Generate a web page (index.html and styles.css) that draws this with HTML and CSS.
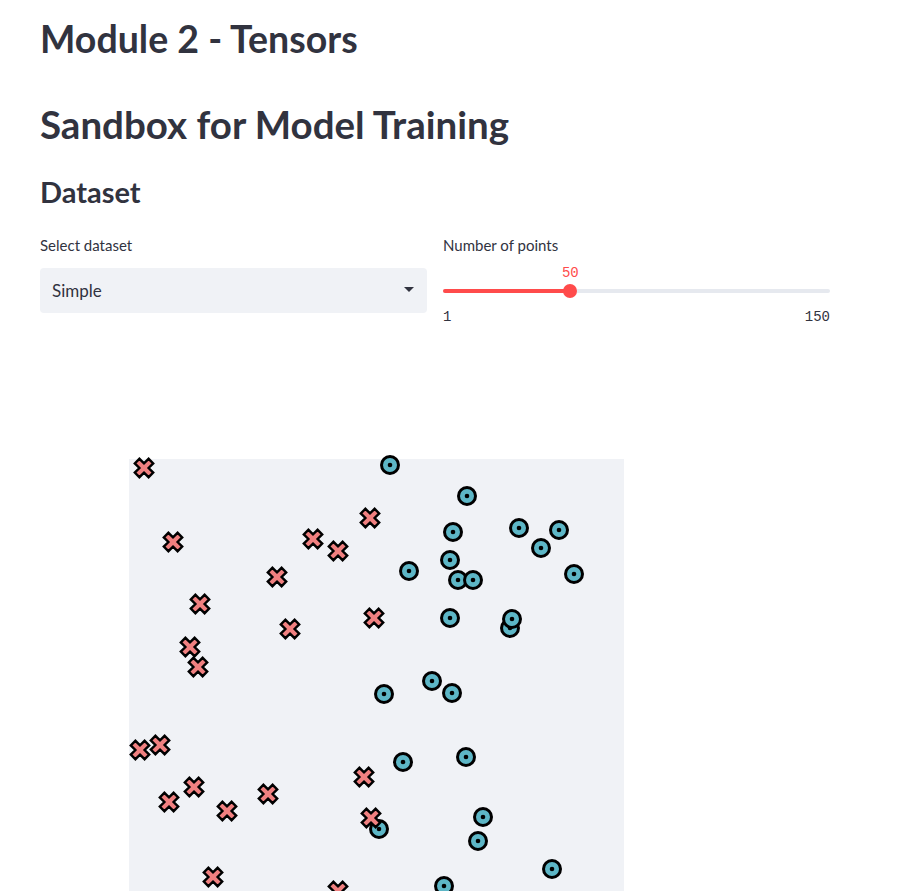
FILE: index.html
```html
<!DOCTYPE html>
<html lang="en">
<head>
  <meta charset="UTF-8">
  <meta name="viewport" content="width=device-width, initial-scale=1.0">
  <title>Module 2 - Tensors</title>
  <link rel="stylesheet" href="styles.css">
</head>
<body>
  <div class="main">
    <h1 class="title">Module 2 - Tensors</h1>
    <h1 class="title big">Sandbox for Model Training</h1>
    <h3 class="subhead">Dataset</h3>

    <div class="columns">
      <div class="col">
        <label class="widget-label">Select dataset</label>
        <div class="select">
          <span>Simple</span>
          <svg class="caret" width="10" height="6" viewBox="0 0 10 6"><path d="M0,0 L10,0 L5,5 Z" fill="#31333f"/></svg>
        </div>
      </div>
      <div class="col">
        <label class="widget-label">Number of points</label>
        <div class="slider">
          <div class="track">
            <div class="fill" style="width:32.9%"></div>
            <div class="thumb" style="left:32.9%"><span class="thumb-value">50</span></div>
          </div>
          <div class="ticks"><span>1</span><span>150</span></div>
        </div>
      </div>
    </div>

    <svg class="chart" width="790" height="560" viewBox="0 0 790 560">
      <defs>
        <path id="mx" d="M0,4.6l4.6,4.6l4.6,-4.6l-4.6,-4.6l4.6,-4.6l-4.6,-4.6l-4.6,4.6l-4.6,-4.6l-4.6,4.6l4.6,4.6l-4.6,4.6l4.6,4.6Z" fill="#f08080" stroke="#000" stroke-width="2.4"/>
        <g id="mo">
          <circle r="8.5" fill="#5db6c6" stroke="#000" stroke-width="3"/>
          <circle r="2.3" fill="#000"/>
        </g>
      </defs>
      <g transform="translate(-40 -359)">
        <rect x="129" y="459" width="495" height="495" fill="#f0f2f6"/>
        <!-- class 1 -->
        <use href="#mo" x="390" y="465"/>
        <use href="#mo" x="467" y="496"/>
        <use href="#mo" x="453" y="532"/>
        <use href="#mo" x="519" y="528"/>
        <use href="#mo" x="559" y="530"/>
        <use href="#mo" x="541" y="548"/>
        <use href="#mo" x="450" y="560"/>
        <use href="#mo" x="409" y="571"/>
        <use href="#mo" x="458" y="580"/>
        <use href="#mo" x="473" y="580"/>
        <use href="#mo" x="574" y="574"/>
        <use href="#mo" x="450" y="618"/>
        <use href="#mo" x="510" y="628"/>
        <use href="#mo" x="512" y="619"/>
        <use href="#mo" x="432" y="681"/>
        <use href="#mo" x="384" y="694"/>
        <use href="#mo" x="452" y="693"/>
        <use href="#mo" x="403" y="762"/>
        <use href="#mo" x="466" y="757"/>
        <use href="#mo" x="483" y="817"/>
        <use href="#mo" x="379" y="829"/>
        <use href="#mo" x="478" y="841"/>
        <use href="#mo" x="552" y="869"/>
        <use href="#mo" x="444" y="886"/>
        <!-- class 0 -->
        <use href="#mx" x="144" y="468"/>
        <use href="#mx" x="173" y="542"/>
        <use href="#mx" x="313" y="539"/>
        <use href="#mx" x="338" y="551"/>
        <use href="#mx" x="370" y="518"/>
        <use href="#mx" x="277" y="577"/>
        <use href="#mx" x="200" y="604"/>
        <use href="#mx" x="290" y="629"/>
        <use href="#mx" x="374" y="618"/>
        <use href="#mx" x="190" y="647"/>
        <use href="#mx" x="198" y="667"/>
        <use href="#mx" x="140" y="750"/>
        <use href="#mx" x="160" y="745"/>
        <use href="#mx" x="364" y="777"/>
        <use href="#mx" x="194" y="787"/>
        <use href="#mx" x="169" y="802"/>
        <use href="#mx" x="227" y="811"/>
        <use href="#mx" x="268" y="794"/>
        <use href="#mx" x="371" y="818"/>
        <use href="#mx" x="213" y="877"/>
        <use href="#mx" x="338" y="891"/>
      </g>
    </svg>
  </div>
</body>
</html>
```

FILE: styles.css
```css
body {
  margin: 0;
  font-family: Lato, "Noto Sans", sans-serif;
  color: #31333f;
  background: #fff;
}
.main {
  width: 790px;
  padding: 0 40px;
}
.title {
  margin: 0;
  padding-top: 16px;
  font-size: 37.5px;
  font-weight: 700;
  line-height: 1.2;
}
.title.big {
  padding-top: 40px;
  font-size: 38.5px;
}
.subhead {
  margin: 0;
  padding-top: 28px;
  font-size: 29px;
  font-weight: 700;
  line-height: 1.2;
}
.columns {
  display: flex;
  gap: 16px;
  margin-top: 26px;
}
.col {
  flex: 1;
  min-width: 0;
}
.widget-label {
  display: block;
  font-size: 15px;
  line-height: 1.2;
  margin-bottom: 14px;
}
.select {
  display: flex;
  align-items: center;
  justify-content: space-between;
  height: 45px;
  padding: 0 13px 0 12px;
  background: #f0f2f6;
  border-radius: 4px;
  font-size: 17px;
}
.caret {
  display: block;
}
.slider {
  padding-top: 21px;
}
.track {
  position: relative;
  height: 4px;
  background: #e6e9ef;
  border-radius: 2px;
}
.fill {
  height: 4px;
  background: #ff4b4b;
  border-radius: 2px;
}
.thumb {
  position: absolute;
  top: -5px;
  width: 14px;
  height: 14px;
  margin-left: -7px;
  border-radius: 50%;
  background: #ff4b4b;
}
.thumb-value {
  position: absolute;
  bottom: 17px;
  left: 50%;
  transform: translateX(-50%);
  font-family: "Liberation Mono", monospace;
  font-size: 14px;
  color: #ff4b4b;
}
.ticks {
  display: flex;
  justify-content: space-between;
  margin-top: 16px;
  font-family: "Liberation Mono", monospace;
  font-size: 14px;
  line-height: 1.2;
}
.chart {
  display: block;
  margin-top: 33px;
}
```
